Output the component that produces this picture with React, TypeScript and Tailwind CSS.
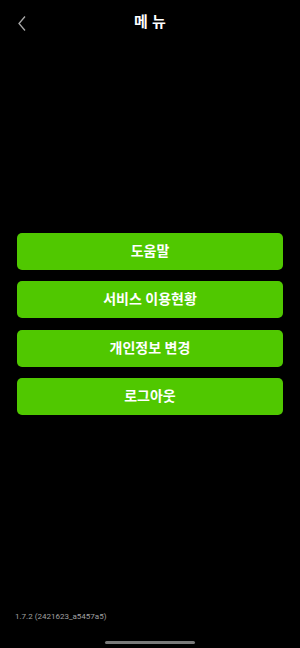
const items = ['도움말', '서비스 이용현황', '개인정보 변경', '로그아웃']

export default function App() {
  return (
    <div
      className="flex h-[648px] w-[300px] flex-col bg-black text-white"
      style={{ fontFamily: 'Roboto, "Noto Sans CJK KR", sans-serif' }}
    >
      {/* header */}
      <header className="relative flex h-11 items-center justify-center">
        <button className="absolute left-[15px] top-[13px] p-[2px]" aria-label="back">
          <svg width="10" height="17" viewBox="0 0 10 17" fill="none">
            <path d="M8 1.5 L2 8.5 L8 15.5" stroke="#a8a8a8" strokeWidth="1.3" />
          </svg>
        </button>
        <h1 className="mt-[1px] text-[15px] font-bold tracking-[0.02em]">메 뉴</h1>
      </header>

      {/* menu */}
      <main className="flex flex-1 flex-col justify-center gap-[11.5px] px-[17px]">
        {items.map((label) => (
          <button
            key={label}
            className="flex h-[37px] items-center justify-center rounded-[5px] bg-[#50c800] text-[14px] font-bold text-white"
          >
            {label}
          </button>
        ))}
      </main>

      {/* footer */}
      <footer className="flex h-11 flex-col justify-between pb-[4px]">
        <p className="pl-[15px] pt-[7px] text-[8px] leading-[12px] text-[#a0a0a0]">1.7.2 (2421623_a5457a5)</p>
        <div className="mx-auto h-[3px] w-[90px] rounded-full bg-[#7a7a7a]" />
      </footer>
    </div>
  )
}
